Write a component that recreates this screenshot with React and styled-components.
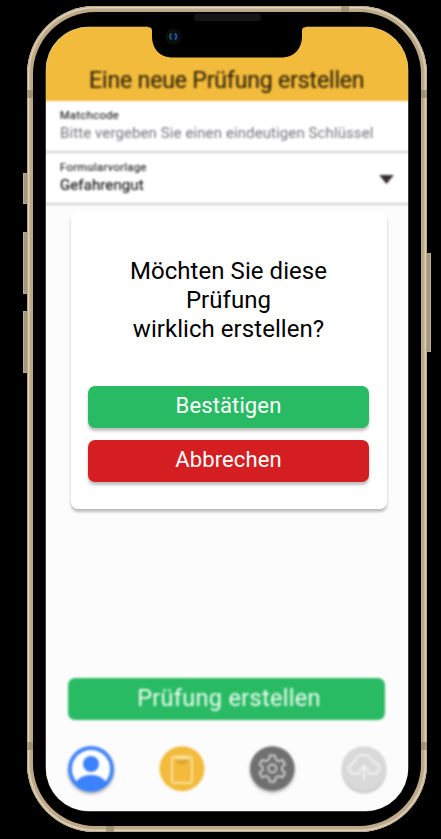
import React from 'react';
import styled, { createGlobalStyle } from 'styled-components';

const GlobalStyle = createGlobalStyle`
  * { box-sizing: border-box; }
  html, body { margin: 0; background: #000; }
  body { overflow: hidden; font-family: Roboto, "Liberation Sans", sans-serif; }
`;

const Stage = styled.main`
  width: 441px;
  height: 839px;
  padding: 6px 0 0 27px;
  background: #000;
`;

const Phone = styled.div`
  position: relative;
  width: 400px;
  height: 826px;
  padding: 6px;
  border-radius: 68px;
  background: #bda988;
  box-shadow: inset 0 0 0 1px #b8a98d, inset 0 0 1px 2.4px #e0d4be;
`;

const Bezel = styled.div`
  height: 100%;
  padding: 15px 13.5px 15px 13px;
  border-radius: 62px;
  background: #000;
`;

const Screen = styled.div`
  position: relative;
  height: 784px;
  overflow: hidden;
  border-radius: 43px;
  background: #fcfcfc;
  box-shadow: 0 0 0 0.5px #777;
`;

const SideButton = styled.span`
  position: absolute;
  top: ${({ $top }) => $top}px;
  ${({ $side }) => ($side === 'left' ? 'left: -4px;' : 'right: -4px;')}
  width: 4px;
  height: ${({ $height }) => $height}px;
  border: 1px solid #b9ae98;
  ${({ $side }) => ($side === 'left' ? 'border-right: 0;' : 'border-left: 0;')}
  border-radius: 1px;
  background: #a6987c;
`;

const Antenna = styled.span`
  position: absolute;
  left: ${({ $x }) => $x}px;
  top: ${({ $y }) => $y}px;
  width: ${({ $flat }) => ($flat ? 8 : 6)}px;
  height: ${({ $flat }) => ($flat ? 6 : 8)}px;
  background: #8e8269;
  opacity: 0.65;
`;

const Notch = styled.svg`
  position: absolute;
  left: 121px;
  top: 7px;
  width: 158px;
  height: 47px;
`;

const Page = styled.div`
  display: flex;
  flex-direction: column;
  height: 804px;
  margin: -10px;
  background: #fcfcfc;
  filter: blur(1.15px);
`;

const Header = styled.header`
  display: flex;
  justify-content: center;
  height: 83.5px;
  padding-top: 50px;
  background: #f3bb3b;
  color: #35280b;
`;

const Title = styled.h1`
  margin: 0;
  font-size: 23px;
  line-height: 28px;
  font-weight: 400;
  letter-spacing: -0.15px;
  -webkit-text-stroke: 0.2px currentColor;
  white-space: nowrap;
`;

const Field = styled.div`
  display: flex;
  align-items: center;
  justify-content: space-between;
  height: 52px;
  padding: 0 24px 0 24px;
  border-bottom: 2px solid #d2d2d2;
  background: #fff;
`;

const FieldText = styled.div`
  display: flex;
  flex-direction: column;
`;

const Label = styled.span`
  font-size: 11px;
  line-height: 14px;
  letter-spacing: 0.45px;
  color: #282828;
  -webkit-text-stroke: 0.2px currentColor;
`;

const Value = styled.span`
  font-size: 15px;
  line-height: 20px;
  letter-spacing: 0.1px;
  color: ${({ $placeholder }) => ($placeholder ? '#77777e' : '#181818')};
  -webkit-text-stroke: ${({ $placeholder }) => ($placeholder ? 0 : 0.2)}px currentColor;
  white-space: nowrap;
`;

const Caret = styled.svg`
  width: 15px;
  height: 10px;
  margin-top: 2px;
`;

const Footer = styled.footer`
  margin-top: auto;
  padding: 0 32px 26.5px;
`;

const CreateButton = styled.button`
  display: block;
  width: 317px;
  height: 42px;
  padding: 0 0 2px 5px;
  border: 0;
  border-radius: 7px;
  background: #29bb63;
  color: #f0fbf4;
  font: 400 23.5px/40px Roboto, sans-serif;
  letter-spacing: 0.3px;
`;

const Nav = styled.nav`
  display: flex;
  justify-content: space-between;
  width: 321px;
  margin: 24.5px 0 0 -1.5px;
`;

const NavIcon = styled.svg`
  width: 48px;
  height: 50px;
  overflow: visible;
  filter: ${({ $shadow }) => ($shadow ? 'drop-shadow(0 2px 1.5px rgba(0,0,0,.3))' : 'none')};
`;

const Dialog = styled.section`
  position: absolute;
  left: 24.5px;
  top: 185px;
  display: flex;
  flex-direction: column;
  gap: 12px;
  width: 316.5px;
  height: 297px;
  padding: 45px 18px 28px 17.5px;
  border-radius: 7px;
  background: #fff;
  box-shadow: 0 3px 3px rgba(0, 0, 0, 0.25);
`;

const Question = styled.p`
  margin: 0 0 29.5px;
  height: 87px;
  font-size: 24px;
  line-height: 29px;
  letter-spacing: 0.05px;
  text-align: center;
  white-space: nowrap;
  color: #000;
`;

const ActionButton = styled.button`
  height: 42px;
  flex: none;
  padding: 0 0 3px;
  border: 0;
  border-radius: 7px;
  background: ${({ $danger }) => ($danger ? '#d51e22' : '#29bb63')};
  color: #fff;
  font: 400 22px/39px Roboto, sans-serif;
  letter-spacing: 0.12px;
  box-shadow: 0 3px 3px rgba(0, 0, 0, 0.25);
`;

function ProfileIcon() {
  return (
    <NavIcon viewBox="0 0 48 50" $shadow>
      <defs><clipPath id="profile"><circle cx="24" cy="24" r="22" /></clipPath></defs>
      <circle cx="24" cy="24" r="21" fill="#fff" stroke="#4285f8" strokeWidth="4" />
      <circle cx="24" cy="19" r="8" fill="#3b82fc" />
      <ellipse cx="24" cy="41" rx="16" ry="11" fill="#3b82fc" clipPath="url(#profile)" />
    </NavIcon>
  );
}

function ClipboardIcon() {
  return (
    <NavIcon viewBox="0 0 48 50">
      <circle cx="24" cy="23.7" r="22.5" fill="#f3bb3b" />
      <rect x="14" y="11.5" width="20" height="26.5" rx="3" fill="none" stroke="#fadf9e" strokeWidth="2" />
      <path d="M18 14h12v3q-6 5-12 0z" fill="#dca52d" />
      <path d="M17 13q7-5 14 0v1.500H17z" fill="#fadf9e" />
    </NavIcon>
  );
}

function SettingsIcon() {
  return (
    <NavIcon viewBox="0 0 48 50" $shadow>
      <circle cx="23.3" cy="23.5" r="22.3" fill="#707070" />
      <g transform="translate(-0.7 -0.500)" fill="none" stroke="#cacaca" strokeWidth="2" strokeLinejoin="round">
        <path d="M21.5 11h5l1 4.2 2.6 1.5 4.2-1.3 2.5 4.3-3.1 2.9v3l3.1 2.9-2.5 4.3-4.2-1.3-2.6 1.5-1 4.2h-5l-1-4.2-2.6-1.5-4.2 1.3-2.5-4.3 3.1-2.9v-3l-3.1-2.9 2.5-4.3 4.2 1.3 2.6-1.5z" />
        <circle cx="24" cy="24" r="4" />
      </g>
    </NavIcon>
  );
}

function UploadIcon() {
  return (
    <NavIcon viewBox="0 0 48 50">
      <circle cx="24" cy="26" r="22.5" fill="#cbcbcb" />
      <circle cx="24" cy="23.7" r="22.5" fill="#d9d9d9" />
      <g fill="none" stroke="#f2f2f2" strokeWidth="2" strokeLinecap="round" strokeLinejoin="round">
        <path d="M20 28.500h-5.500a5 5 0 0 1-.5-10.500c1-10 16-11 19-1 8 0 8 11.500 1 11.500H28" />
        <path d="M24 34V21m-4.500 4.500L24 21l4.500 4.500" />
      </g>
    </NavIcon>
  );
}

export default function App() {
  return (
    <Stage>
      <GlobalStyle />
      <Phone>
        <Bezel>
          <Screen>
            <Page>
              <Header><Title>Eine neue Prüfung erstellen</Title></Header>
              <Field>
                <FieldText>
                  <Label>Matchcode</Label>
                  <Value $placeholder>Bitte vergeben Sie einen eindeutigen Schlüssel</Value>
                </FieldText>
              </Field>
              <Field>
                <FieldText>
                  <Label>Formularvorlage</Label>
                  <Value>Gefahrengut</Value>
                </FieldText>
                <Caret viewBox="0 0 16 11"><path d="M0 1h16L8 11z" fill="#332d2d" /></Caret>
              </Field>
              <Footer>
                <CreateButton>Prüfung erstellen</CreateButton>
                <Nav>
                  <ProfileIcon />
                  <ClipboardIcon />
                  <SettingsIcon />
                  <UploadIcon />
                </Nav>
              </Footer>
            </Page>
            <Dialog>
              <Question>Möchten Sie diese<br />Prüfung<br />wirklich erstellen?</Question>
              <ActionButton>Bestätigen</ActionButton>
              <ActionButton $danger>Abbrechen</ActionButton>
            </Dialog>
          </Screen>
        </Bezel>
        <Notch viewBox="148 13 158 47">
          <path d="M148 24H306V27.300H305Q302 27.300 302 31V36C302 49 294 57.500 281 57.500H173C160 57.500 152 49 152 36V31Q152 27.300 149 27.300H148Z" fill="#000" />
          <rect x="194" y="13.500" width="67" height="7.500" rx="3.500" fill="#151515" />
          <circle cx="173.300" cy="36.700" r="8" fill="#0d0d10" />
          <circle cx="173.300" cy="36.700" r="4.200" fill="#0a1422" />
          <path d="M171.500 33.500q-3 3 0 6" fill="none" stroke="#1f5a5a" strokeWidth="2" />
          <path d="M175 33.500q3 3 0 6" fill="none" stroke="#2450a0" strokeWidth="2" />
        </Notch>
        <SideButton $side="left" $top={167} $height={31} />
        <SideButton $side="left" $top={226} $height={62} />
        <SideButton $side="left" $top={305} $height={62} />
        <SideButton $side="right" $top={247} $height={99} />
        <Antenna $x={0} $y={84} />
        <Antenna $x={394} $y={84} />
        <Antenna $x={0} $y={736} />
        <Antenna $x={394} $y={736} />
        <Antenna $flat $x={314} $y={0} />
        <Antenna $flat $x={79} $y={820} />
      </Phone>
    </Stage>
  );
}
